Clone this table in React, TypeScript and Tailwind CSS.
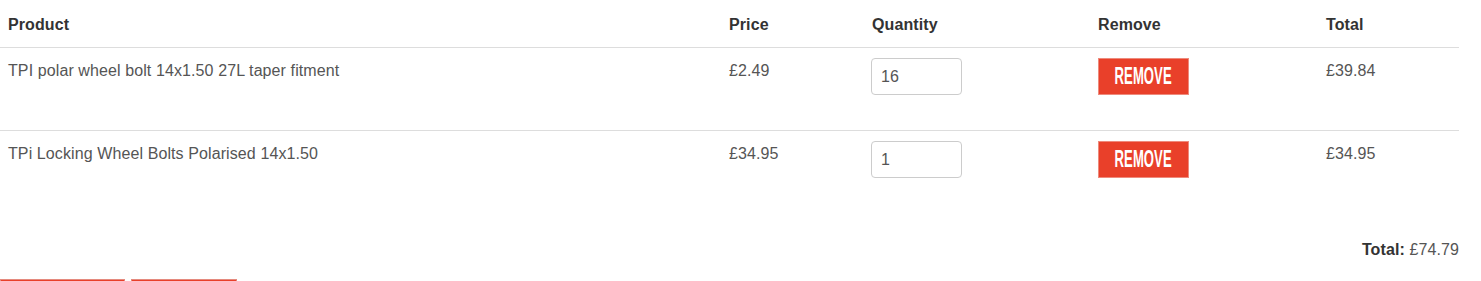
import React from "react";

const font = { fontFamily: '"Liberation Sans", Arial, sans-serif' };

const rows = [
  { name: "TPI polar wheel bolt 14x1.50 27L taper fitment", price: "£2.49", qty: "16", total: "£39.84" },
  { name: "TPi Locking Wheel Bolts Polarised 14x1.50", price: "£34.95", qty: "1", total: "£34.95" },
];

const cols = "grid grid-cols-[721px_143px_226px_228px_141px]";

function RemoveBtn() {
  return (
    <button className="w-[91px] h-[37px] bg-[#e9402a] border border-[#ee8a7c] flex items-center justify-center overflow-hidden">
      <span className="inline-block text-white font-bold text-[23px] leading-none scale-x-57 scale-y-105" style={font}>
        REMOVE
      </span>
    </button>
  );
}

export default function App() {
  return (
    <div className="w-[1481px] h-[281px] overflow-hidden bg-white text-[16px] leading-[23px] text-[#555] tracking-[0.1px]" style={font}>
      <div className="w-[1459px]">
        <div className={`${cols} h-[48px] border-b border-[#ddd] font-bold text-[#333]`}>
          <div className="pl-[8px] pt-[13px]">Product</div>
          <div className="pl-[8px] pt-[13px]">Price</div>
          <div className="pl-[8px] pt-[13px]">Quantity</div>
          <div className="pl-[8px] pt-[13px]">Remove</div>
          <div className="pl-[8px] pt-[13px]">Total</div>
        </div>
        {rows.map((r, i) => (
          <div key={i} className={`${cols} h-[83px] ${i === 0 ? "border-b border-[#ddd]" : ""}`}>
            <div className="pl-[8px] pt-[11px]">{r.name}</div>
            <div className="pl-[8px] pt-[11px]">{r.price}</div>
            <div className="pl-[7px] pt-[10px]">
              <div className="w-[91px] h-[37px] border border-[#ccc] rounded-[4px] flex items-center pl-[9px] text-[16px] text-[#555]">
                {r.qty}
              </div>
            </div>
            <div className="pl-[8px] pt-[10px]">
              <RemoveBtn />
            </div>
            <div className="pl-[8px] pt-[11px]">{r.total}</div>
          </div>
        ))}
        <div className="mt-[24px] text-right">
          <span className="font-bold text-[#333]">Total:</span> £74.79
        </div>
        <div className="mt-[18px] flex gap-[6px]">
          <div className="w-[125px] h-[40px] bg-[#e9402a] border border-[#e58a7e]" />
          <div className="w-[106px] h-[40px] bg-[#e9402a] border border-[#e58a7e]" />
        </div>
      </div>
    </div>
  );
}
